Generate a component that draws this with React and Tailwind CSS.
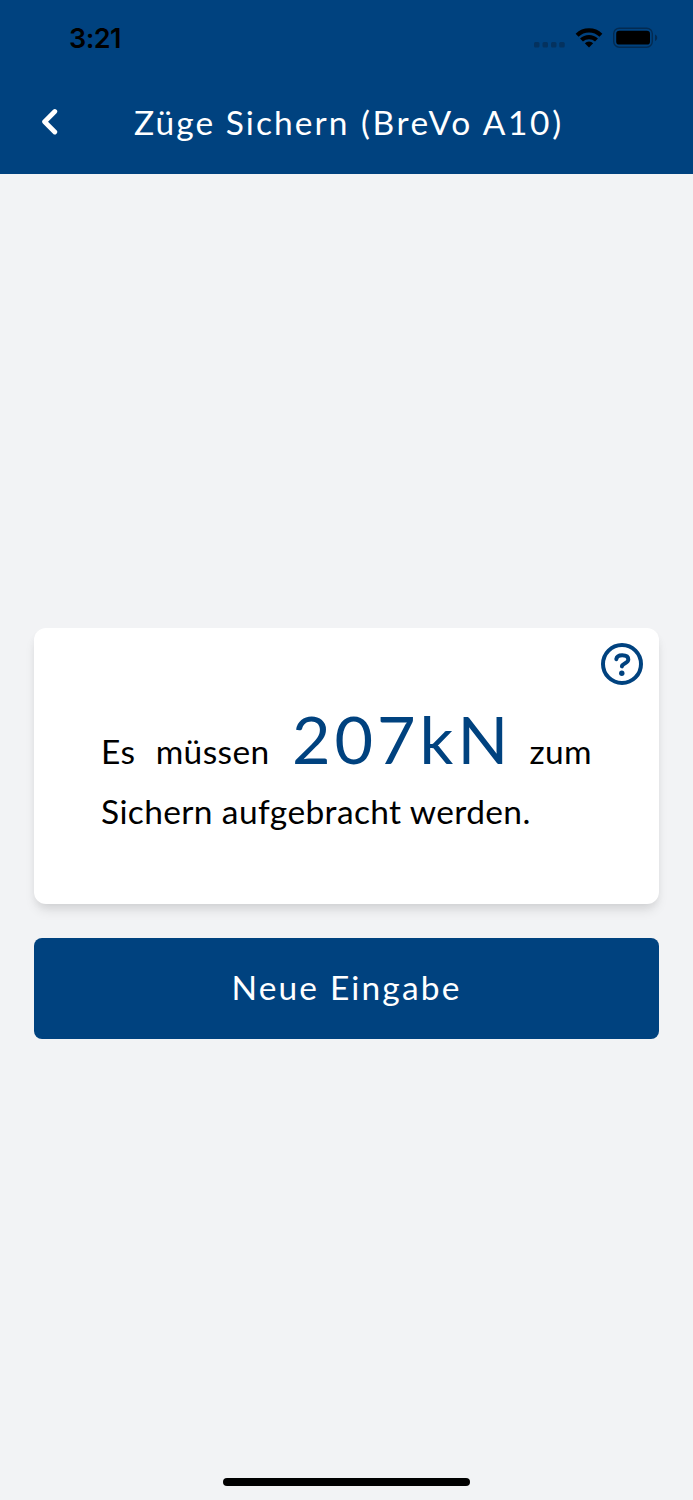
import React from "react";

function StatusBar() {
  return (
    <div className="flex h-[72px] items-start justify-between pl-[69px] pr-[35px] pt-[22px]">
      <span className="font-['Inter',sans-serif] text-[27px] font-semibold leading-[33px] tracking-[-0.5px] text-black">3:21</span>
      <svg width="124" height="22" viewBox="0 0 124 22" className="mt-[4px]">
        {/* signal dots */}
        <g fill="#04325f">
          <rect x="0" y="16" width="5.5" height="5.5" rx="1.5" />
          <rect x="8.5" y="16" width="5.5" height="5.5" rx="1.5" />
          <rect x="17" y="16" width="5.5" height="5.5" rx="1.5" />
          <rect x="25.2" y="16" width="5.5" height="5.5" rx="1.5" />
        </g>
        {/* wifi */}
        <g fill="none" stroke="#000" strokeWidth="4.2">
          <path d="M43.1 9.2a17 17 0 0 1 23.8 0" />
          <path d="M47.5 14.1a10.8 10.8 0 0 1 15 0" />
        </g>
        <path d="M50.8 17.2a6 6 0 0 1 8.4 0L55 21.4z" fill="#000" />
        {/* battery */}
        <rect x="79.7" y="2.2" width="38.6" height="19" rx="5.6" fill="none" stroke="#032b52" strokeWidth="1.4" />
        <rect x="82.2" y="4.8" width="33.8" height="13.8" rx="3.2" fill="#000" />
        <path d="M121 8.5c1.4.6 2.2 1.8 2.2 3.2s-.8 2.6-2.2 3.2z" fill="#032b52" />
      </svg>
    </div>
  );
}

function Header({ title, source }) {
  return (
    <header className="h-[174px] bg-[#00427f]">
      <StatusBar />
      <div className="flex h-[100px] items-center pl-[40px]">
        <button className="w-[94px]">
          <svg width="18" height="28" viewBox="0 0 18 28" fill="none" stroke="#fff" strokeWidth="4.8" strokeLinecap="round" strokeLinejoin="round">
            <path d="M14.8 3.5 4.6 13.7 14.8 24" />
          </svg>
        </button>
        <h1 className="whitespace-nowrap text-[33.5px] tracking-[2.05px] text-white">
          {title} <span className="ml-[1px] tracking-[2.6px]">{source}</span>
        </h1>
      </div>
    </header>
  );
}

function HelpIcon() {
  return (
    <svg width="42" height="42" viewBox="0 0 42 42" fill="none" stroke="#00427f" strokeWidth="4" strokeLinecap="round" strokeLinejoin="round">
      <circle cx="21" cy="21" r="19" />
      <path d="M15.3 16.2C15.8 13.4 17.6 12.3 21.2 12.3C25 12.3 27.3 13.8 27.3 16.6C27.3 20.4 21.6 20 20.9 23.4" />
      <circle cx="20.8" cy="30.2" r="2.7" fill="#00427f" stroke="none" />
    </svg>
  );
}

export default function App() {
  return (
    <div className="flex h-[1500px] w-[693px] flex-col bg-[#f2f3f5] font-['Lato',sans-serif]">
      <Header title="Züge Sichern" source="(BreVo A10)" />

      <main className="flex flex-1 flex-col px-[34px] pt-[454px]">
        <div className="relative h-[276px] w-[625px] rounded-[12px] bg-white px-[67px] pt-[80px] shadow-[0_8px_12px_-2px_rgba(0,0,0,0.1),0_4px_8px_-2px_rgba(0,0,0,0.06)]">
          <button className="absolute right-[16px] top-[15px]">
            <HelpIcon />
          </button>
          <p className="text-justify text-[33.5px] leading-[60px] tracking-[0.37px] text-black">
            Es müssen{" "}
            <span className="ml-[2px] mr-[-3px] text-[66.5px] tracking-[4px] text-[#00427f]">207kN</span>{" "}
            zum Sichern aufgebracht werden.
          </p>
        </div>

        <button className="mt-[33.5px] h-[101.5px] w-[625px] rounded-[8px] bg-[#00427f] pb-[2px] text-[33.5px] tracking-[2.15px] text-white">
          Neue Eingabe
        </button>
      </main>

      <div className="mb-[14px] flex justify-center">
        <div className="h-[8px] w-[247px] rounded-full bg-black" />
      </div>
    </div>
  );
}
